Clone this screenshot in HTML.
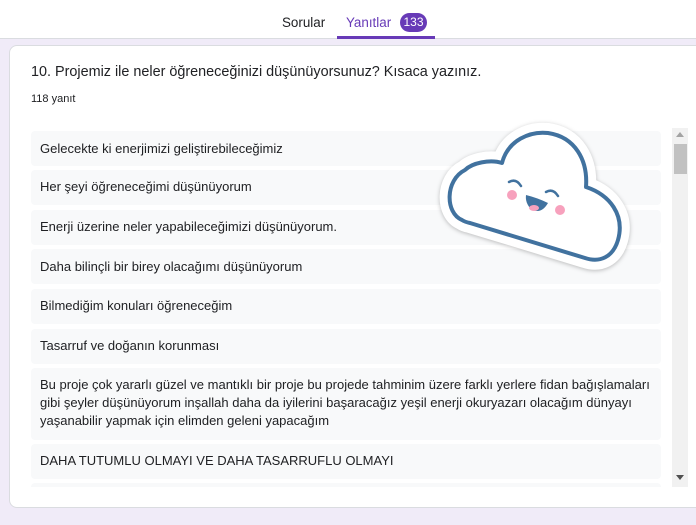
<!DOCTYPE html>
<html><head><meta charset="utf-8"><style>
*{margin:0;padding:0;box-sizing:border-box}
body{width:696px;height:525px;overflow:hidden;background:#f0ebf8;font-family:"Liberation Sans",Arial,sans-serif;position:relative}
.hdr{position:absolute;left:0;top:0;width:696px;height:39px;background:#fff;border-bottom:1px solid #dadce0}
.tab{position:absolute;top:15px;font-size:13.4px;color:#202124}
.ul{position:absolute;left:337px;top:36px;width:98px;height:3px;background:#673ab7}
.badge{position:absolute;left:400px;top:13px;width:27px;height:19px;border-radius:10px;background:#673ab7;color:#fff;font-size:12px;text-align:center;line-height:19px}
.card{position:absolute;left:9px;top:45px;width:700px;height:463px;background:#fff;border-radius:8px;border:1px solid #dadce0}
.q{position:absolute;left:31px;top:64px;font-size:14.4px;color:#202124}
.cnt{position:absolute;left:31px;top:93px;font-size:11px;color:#202124}
.list{position:absolute;left:31px;top:128px;width:630px;height:359px;overflow:hidden}
.it{position:absolute;left:0;width:630px;background:#f8f9fa;border-radius:4px;font-size:13px;color:#202124;padding:0 9px;line-height:18px}
.sb{position:absolute;left:672px;top:128px;width:16px;height:359px;background:#f1f1f1}
</style></head><body>
<div class="hdr">
<div class="tab" style="left:282px">Sorular</div>
<div class="tab" style="left:346px;color:#673ab7">Yanıtlar</div>
<div class="badge">133</div>
<div class="ul"></div>
</div>
<div class="card"></div>
<div class="q">10. Projemiz ile neler öğreneceğinizi düşünüyorsunuz? Kısaca yazınız.</div>
<div class="cnt">118 yanıt</div>
<div class="list">
<div class="it" style="top:3px;height:35px;padding-top:9px">Gelecekte ki enerjimizi geliştirebileceğimiz</div>
<div class="it" style="top:42px;height:35px;padding-top:8px">Her şeyi öğreneceğimi düşünüyorum</div>
<div class="it" style="top:82px;height:35px;padding-top:8px">Enerji üzerine neler yapabileceğimizi düşünüyorum.</div>
<div class="it" style="top:121px;height:35px;padding-top:9px">Daha bilinçli bir birey olacağımı düşünüyorum</div>
<div class="it" style="top:161px;height:35px;padding-top:8px">Bilmediğim konuları öğreneceğim</div>
<div class="it" style="top:201px;height:35px;padding-top:8px">Tasarruf ve doğanın korunması</div>
<div class="it" style="top:240px;height:72px;padding-top:8px">Bu proje çok yararlı güzel ve mantıklı bir proje bu projede tahminim üzere farklı yerlere fidan bağışlamaları gibi şeyler düşünüyorum inşallah daha da iyilerini başaracağız yeşil enerji okuryazarı olacağım dünyayı yaşanabilir yapmak için elimden geleni yapacağım</div>
<div class="it" style="top:316px;height:35px;padding-top:8px">DAHA TUTUMLU OLMAYI VE DAHA TASARRUFLU OLMAYI</div>
<div class="it" style="top:355px;height:35px"></div>
</div>
<div class="sb">
<div style="position:absolute;left:4px;top:4px;border:4px solid transparent;border-bottom:5px solid #a3a3a3;border-top:0"></div>
<div style="position:absolute;left:2px;top:16px;width:13px;height:30px;background:#c1c1c1"></div>
<div style="position:absolute;left:4px;top:347px;border:4px solid transparent;border-top:5px solid #505050;border-bottom:0"></div>
</div>
<svg style="position:absolute;left:420px;top:95px" width="240" height="200" viewBox="0 0 240 200">
<path id="c" d="M42 125 C25 118 25 85 45 75 C52 68 70 64 82 68 C88 45 110 36 128 38 C155 42 168 65 166 92 C190 100 205 120 198 145 C193 162 180 168 165 163 L50 128 Q45 127 42 125Z" fill="#fff" stroke="#fff" stroke-width="20" stroke-linejoin="round" style="filter:drop-shadow(0 1px 2px rgba(0,0,0,.25))"/>
<path d="M42 125 C25 118 25 85 45 75 C52 68 70 64 82 68 C88 45 110 36 128 38 C155 42 168 65 166 92 C190 100 205 120 198 145 C193 162 180 168 165 163 L50 128 Q45 127 42 125Z" fill="#fff" stroke="#41729f" stroke-width="4" stroke-linejoin="round"/>
<path d="M89 87 Q96 83 101 91" fill="none" stroke="#41729f" stroke-width="2.5" stroke-linecap="round"/>
<path d="M126 97 Q133 93 138 101" fill="none" stroke="#41729f" stroke-width="2.5" stroke-linecap="round"/>
<circle cx="92" cy="100" r="5" fill="#f7a1bd"/>
<circle cx="140" cy="115" r="5" fill="#f7a1bd"/>
<path d="M106 100 Q118 103 128 108 Q121 120 111 114 Q105 108 106 100Z" fill="#41729f"/>
<ellipse cx="114" cy="113" rx="5" ry="3" fill="#f7a1bd"/>
</svg>
</body></html>
